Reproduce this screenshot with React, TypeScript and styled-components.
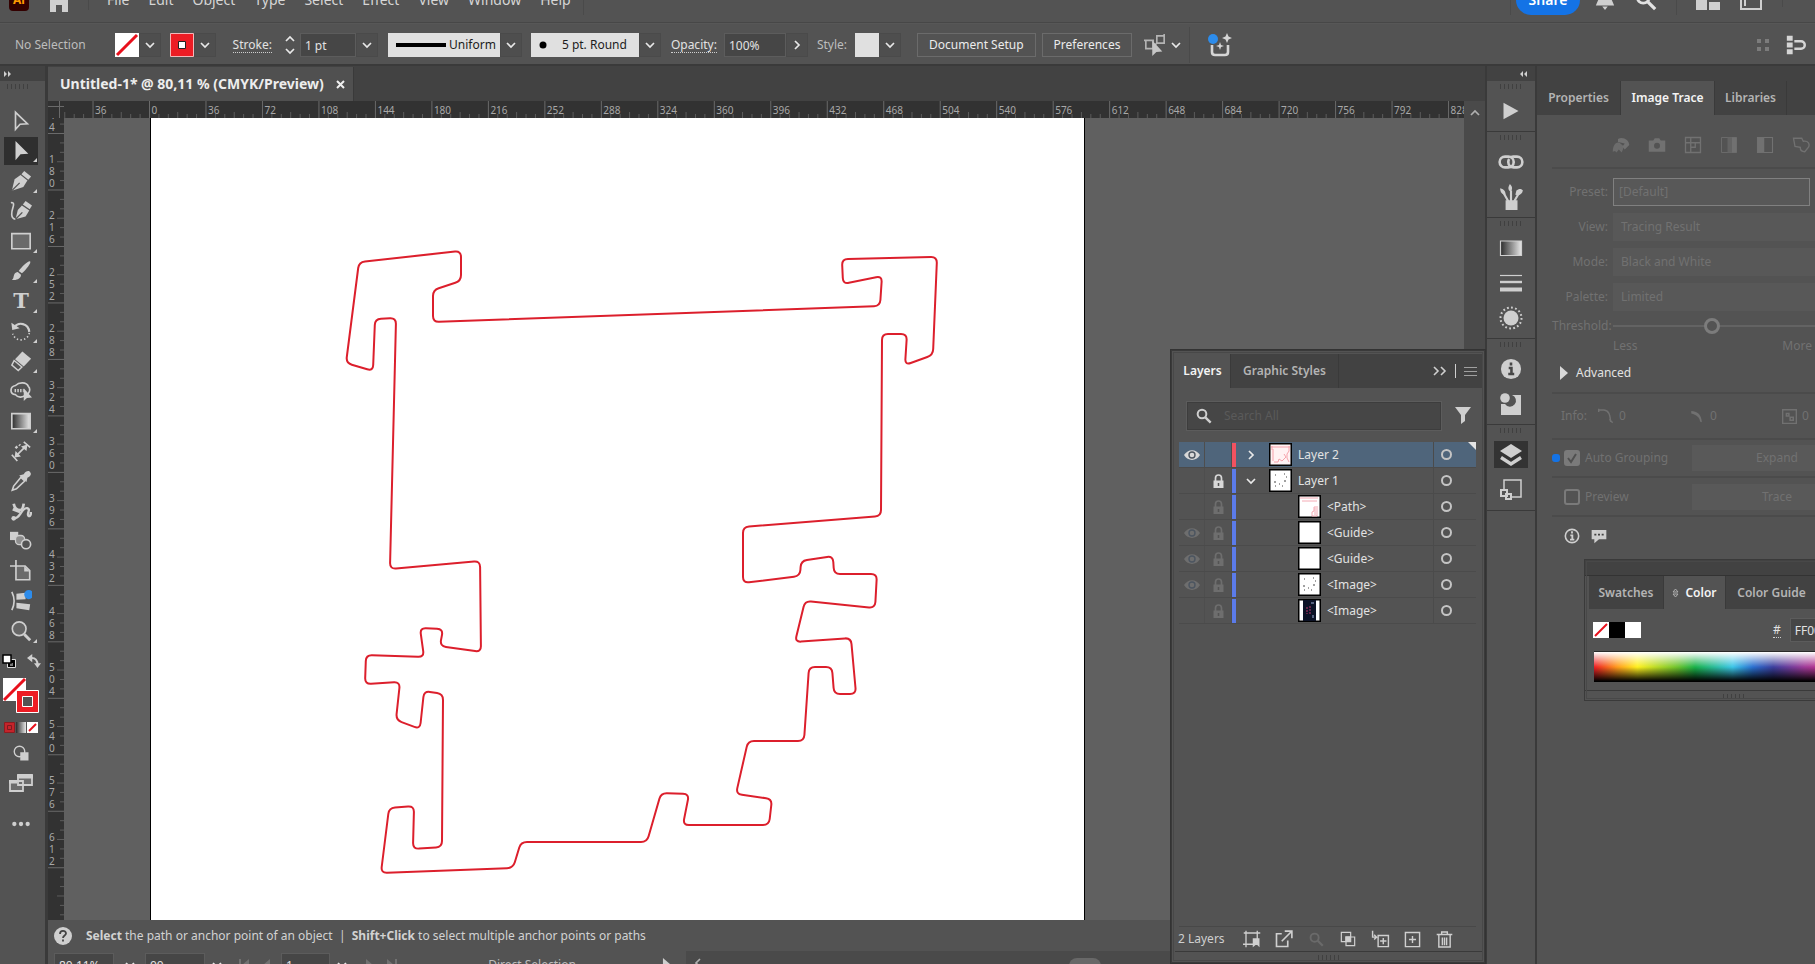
import React from "react";
import styled, { createGlobalStyle, css } from "styled-components";

const color = {
  chrome: "#535353",
  dark: "#424242",
  field: "#464646",
  line: "#3a3a3a",
  seam: "#4a4a4a",
  ruler: "#323232",
  canvas: "#606060",
  text: "#e2e2e2",
  soft: "#bdbdbd",
  icon: "#cfcfcf",
  off: "#717171",
  red: "#ed1c24",
  blue: "#1473e6",
};

const Global = createGlobalStyle`
  * { box-sizing: border-box; }
  body {
    margin: 0;
    overflow: hidden;
    background: ${color.chrome};
    color: ${color.text};
    font: 12px/16px "Noto Sans", "Open Sans", sans-serif;
  }
  button, input, select { font: inherit; color: inherit; margin: 0; }
  button { background: none; border: 0; padding: 0; }
  h2, ul, p { margin: 0; padding: 0; font: inherit; list-style: none; }
  svg { display: block; flex: none; }
`;

/* ---------- shell ---------- */

const Shell = styled.div`
  display: flex;
  flex-direction: column;
  height: 100vh;
  overflow: hidden;
`;

const MenuClip = styled.header`
  flex: none;
  height: 23px;
  overflow: hidden;
  border-bottom: 1px solid #474747;
`;

const MenuRow = styled.div`
  display: flex;
  align-items: center;
  height: 44px;
  margin-top: -22px;
  padding-left: 9px;
  font-size: 14px;
  line-height: 20px;
`;

const AppBadge = styled.span`
  display: flex;
  align-items: center;
  justify-content: center;
  width: 20px;
  height: 22px;
  margin-right: 18px;
  border-radius: 4px;
  background: #330000;
  color: #ff9a00;
  font-weight: 700;
  font-size: 12px;
`;

const Menus = styled.nav`
  display: flex;
  gap: 19px;
  padding-left: 18px;
  margin-left: 17px;
  border-left: 1px solid ${color.seam};
  color: #d6d6d6;
`;

const Divider = styled.span<{ $h?: number }>`
  flex: none;
  width: 1px;
  height: ${(p) => p.$h ?? 30}px;
  background: ${color.seam};
`;

const Grow = styled.span`
  flex: 1;
`;

const ShareButton = styled.button`
  width: 64px;
  height: 30px;
  margin-left: 5px;
  border-radius: 15px;
  background: ${color.blue};
  color: #fff;
  font-weight: 600;
`;

const MenuIcons = styled.div`
  display: flex;
  align-items: center;
  gap: 19px;
  padding-left: 14px;
`;

/* ---------- control bar ---------- */

const ControlBar = styled.div`
  display: flex;
  flex: none;
  align-items: center;
  height: 43px;
  padding: 2px 9px 0 15px;
  border-top: 1px solid #575757;
  border-bottom: 2px solid ${color.line};
  white-space: nowrap;
`;

const Group = styled.div<{ $ml?: number }>`
  display: flex;
  align-items: center;
  height: 24px;
  margin-left: ${(p) => p.$ml ?? 10}px;
`;

const Soft = styled.span`
  color: ${color.soft};
`;

const Dotted = styled.label`
  border-bottom: 1px dotted ${color.icon};
  line-height: 15px;
`;

const Arrow = styled.button<{ $w?: number }>`
  display: flex;
  align-items: center;
  justify-content: center;
  width: ${(p) => p.$w ?? 22}px;
  height: 24px;
  border: 1px solid ${color.seam};
  background: #4e4e4e;
`;

const Field = styled.input<{ $w: number }>`
  width: ${(p) => p.$w}px;
  height: 24px;
  padding: 0 4px;
  border: 1px solid #5c5c5c;
  border-radius: 0;
  background: ${color.field};
`;

const Stepper = styled.span`
  display: flex;
  flex-direction: column;
  align-items: center;
  justify-content: center;
  gap: 2px;
  width: 20px;
`;

const PreviewBox = styled.span<{ $w: number; $pad: number }>`
  display: flex;
  align-items: center;
  justify-content: space-between;
  width: ${(p) => p.$w}px;
  height: 24px;
  padding: 0 ${(p) => p.$pad}px 0 8px;
  background: #e0e0e0;
  color: #1c1c1c;
`;

const BareSelect = styled.select`
  appearance: none;
  padding: 0;
  border: 0;
  background: none;
  text-align: right;
`;

const LineButton = styled.button`
  height: 24px;
  padding: 0 11px;
  border: 1px solid #6b6b6b;
  color: #ececec;
`;

/* ---------- body ---------- */

const Body = styled.div`
  display: flex;
  flex: 1;
  min-height: 0;
`;

const Tools = styled.nav`
  flex: none;
  width: 48px;
  border-right: 3px solid ${color.line};
`;

const StripHead = styled.div<{ $end?: boolean }>`
  display: flex;
  flex: none;
  align-items: center;
  justify-content: ${(p) => (p.$end ? "flex-end" : "flex-start")};
  height: 15px;
  padding: 0 8px 0 4px;
  background: ${color.dark};
`;

const Grip = styled.div<{ $h: number; $left?: boolean }>`
  height: ${(p) => p.$h}px;
  background: repeating-linear-gradient(90deg, #404040 0 1px, transparent 1px 4px)
    ${(p) => (p.$left ? "7px 3px" : "center 3px")} / 22px 5px no-repeat;
`;

const ToolButton = styled.button<{ $on?: boolean }>`
  position: relative;
  display: flex;
  align-items: center;
  justify-content: center;
  width: 34px;
  height: 30px;
  margin-left: 4px;
  color: ${color.icon};
  ${(p) =>
    p.$on &&
    css`
      background: #2f2f2f;
      background-clip: padding-box;
      border: solid transparent;
      border-width: 1px 0;
    `}
`;

const Corner = styled.i`
  position: absolute;
  right: 1px;
  bottom: 3px;
  border: 2px solid ${color.icon};
  border-left-color: transparent;
  border-top-color: transparent;
`;

const TypeGlyph = styled.span`
  font: 700 21px/24px "DejaVu Serif", "Liberation Serif", serif;
`;

const MiniRow = styled.div`
  display: flex;
  align-items: center;
  justify-content: space-between;
  height: 30px;
  padding: 0 4px 0 2px;
`;

const ModeRow = styled.div`
  display: flex;
  align-items: center;
  gap: 1px;
  height: 22px;
  padding-left: 4px;
`;

const MoreTools = styled.div`
  padding-top: 11px;
`;

/* ---------- document ---------- */

const Doc = styled.main`
  position: relative;
  display: flex;
  flex: 1;
  flex-direction: column;
  min-width: 0;
`;

const DocTabs = styled.div`
  display: flex;
  flex: none;
  height: 35px;
  padding-top: 1px;
  background: ${color.dark};
`;

const DocTab = styled.div`
  display: flex;
  align-items: center;
  gap: 12px;
  padding: 0 8px 0 12px;
  border-right: 1px solid ${color.line};
  background: #505050;
  color: #ededed;
  font-size: 14px;
  font-weight: 700;
  white-space: nowrap;
`;

const Stage = styled.div`
  display: grid;
  flex: 1;
  grid-template: 17px minmax(0, 1fr) / 16px minmax(0, 1fr) 21px;
  min-height: 0;
`;

const RulerBox = styled.div`
  overflow: hidden;
  background: ${color.ruler};
  svg text {
    fill: #a8a8a8;
    font: 10px "Noto Sans", sans-serif;
  }
`;

const ScrollColumn = styled.div`
  grid-area: 1 / 3 / 3 / 4;
  display: flex;
  justify-content: center;
  padding-top: 7px;
  background: ${color.seam};
`;

const Canvas = styled.div`
  overflow: hidden;
  padding-left: 86px;
  background: ${color.canvas};
`;

const Artboard = styled.div`
  width: 935px;
  min-height: 100%;
  border: solid #000;
  border-width: 0 1px;
  background: #fff;
`;

const Hint = styled.div`
  display: flex;
  flex: none;
  align-items: center;
  gap: 14px;
  height: 31px;
  padding-left: 6px;
  color: #d2d2d2;
  white-space: pre;
`;

const StatusClip = styled.div`
  flex: none;
  height: 13px;
  overflow: hidden;
`;

const Status = styled.div`
  display: flex;
  align-items: center;
  height: 28px;
  padding-left: 6px;
  color: ${color.text};
`;

const ScrollTrack = styled.div`
  display: flex;
  flex: 1;
  gap: 366px;
  height: 28px;
  margin-left: 8px;
  padding: 7px 0 0 7px;
  background: ${color.seam};
`;

const Thumb = styled.div`
  width: 32px;
  height: 16px;
  border-radius: 8px;
  background: #686868;
`;

const Slot = styled.span<{ $w: number; $start?: boolean }>`
  display: flex;
  flex: none;
  align-items: center;
  justify-content: ${(p) => (p.$start ? "flex-start" : "center")};
  gap: 10px;
  width: ${(p) => p.$w}px;
`;

/* ---------- dock ---------- */

const Dock = styled.aside`
  display: flex;
  flex: none;
  flex-direction: column;
  width: 52px;
  border: solid ${color.line};
  border-width: 0 2px;
`;

const DockGroup = styled.div`
  padding-bottom: 3px;
  border-bottom: 1px solid ${color.line};
`;

const DockButton = styled.button<{ $on?: boolean }>`
  display: flex;
  align-items: center;
  justify-content: center;
  width: 34px;
  height: 35px;
  margin: 0 auto;
  color: ${color.icon};
  ${(p) =>
    p.$on &&
    css`
      border: solid transparent;
      border-width: 4px 0;
      background: #333;
      background-clip: padding-box;
    `}
`;

/* ---------- panels ---------- */

const Side = styled.aside`
  position: relative;
  flex: none;
  width: 278px;
  overflow: hidden;
`;

const Tabs = styled.div<{ $h: number }>`
  display: flex;
  flex: none;
  height: ${(p) => p.$h}px;
  background: ${color.dark};
  white-space: nowrap;
`;

const Tab = styled.button<{ $on?: boolean; $w: number }>`
  display: flex;
  flex: none;
  align-items: center;
  gap: 6px;
  justify-content: center;
  width: ${(p) => p.$w}px;
  border-right: 1px solid ${color.line};
  background: ${(p) => (p.$on ? color.chrome : "transparent")};
  color: ${(p) => (p.$on ? "#f4f4f4" : "#b4b4b4")};
  font-weight: 600;
`;

const TraceModes = styled.div`
  display: flex;
  align-items: center;
  gap: 18px;
  height: 54px;
  margin-left: 15px;
  padding: 8px 0 0 60px;
  border-bottom: 2px solid #4b4b4b;
  color: ${color.off};
`;

const TraceForm = styled.form`
  display: grid;
  grid-template-columns: 56px 260px;
  gap: 7px 5px;
  align-items: center;
  padding: 9px 0 0 15px;
  color: ${color.off};
`;

const FormLabel = styled.label`
  text-align: right;
`;

const TraceSelect = styled.select<{ $strong?: boolean }>`
  appearance: none;
  width: ${(p) => (p.$strong ? 197 : 260)}px;
  height: 28px;
  padding: 0 ${(p) => (p.$strong ? 5 : 8)}px;
  border: ${(p) => (p.$strong ? "1px solid #808080" : "0")};
  border-radius: 0;
  background: #585858;
`;

const Range = styled.input`
  appearance: none;
  width: 202px;
  height: 16px;
  background: linear-gradient(#636363, #636363) center / 100% 2px no-repeat;
  &::-webkit-slider-thumb {
    appearance: none;
    width: 16px;
    height: 16px;
    border: 3px solid #7c7c7c;
    border-radius: 50%;
    background: ${color.chrome};
  }
`;

const RangeEnds = styled.div`
  display: flex;
  justify-content: space-between;
  padding: 4px 3px 0 76px;
  color: ${color.off};
`;

const Advanced = styled.button`
  display: flex;
  align-items: center;
  gap: 8px;
  height: 38px;
  padding-left: 23px;
  color: ${color.text};
`;

const SideRow = styled.div<{ $h: number }>`
  display: flex;
  align-items: center;
  height: ${(p) => p.$h}px;
  margin-left: 15px;
  border-top: 2px solid #4b4b4b;
  color: ${color.off};
`;

const InfoCell = styled.span<{ $w: number }>`
  display: flex;
  flex: none;
  align-items: center;
  gap: 5px;
  width: ${(p) => p.$w}px;
`;

const InfoLabel = styled(InfoCell)`
  padding-left: 9px;
`;

const Dot = styled.i<{ $show?: boolean }>`
  flex: none;
  width: 8px;
  height: 8px;
  margin-right: 4px;
  border-radius: 3px;
  background: ${(p) => (p.$show ? color.blue : "transparent")};
`;

const CheckLabel = styled.label`
  display: flex;
  flex: none;
  align-items: center;
  gap: 5px;
  width: 128px;
`;

const Check = styled.input`
  appearance: none;
  width: 16px;
  height: 16px;
  margin: 0;
  border: 2px solid #7a7a7a;
  border-radius: 3px;
  &:checked {
    background: #7a7a7a;
  }
`;

const CheckBox = styled.span`
  display: grid;
  > * {
    grid-area: 1 / 1;
  }
  svg {
    z-index: 1;
    pointer-events: none;
  }
`;

const WideButton = styled.button`
  flex: none;
  width: 170px;
  height: 26px;
  background: #595959;
`;

const SideFoot = styled(SideRow)`
  gap: 11px;
  padding-left: 12px;
  color: ${color.icon};
`;

const FloatBase = css`
  position: absolute;
  border: 1px solid ${color.line};
  outline: 1px solid #484848;
  outline-offset: -3px;
  background: ${color.chrome};
`;

const ColorPanel = styled.section`
  ${FloatBase}
  top: 493px;
  left: 47px;
  width: 300px;
`;

const ColorHead = styled.div`
  height: 16px;
  border-bottom: 1px solid #333;
  background: ${color.dark};
`;

const ColorTabs = styled.div`
  padding-left: 4px;
`;

const ColorRow = styled.div`
  display: flex;
  align-items: center;
  height: 42px;
  padding-left: 8px;
`;

const Chip = styled.button<{ $bg: string }>`
  width: 16px;
  height: 16px;
  background: ${(p) => p.$bg};
`;

const Spectrum = styled.div`
  height: 31px;
  margin: 0 0 8px 9px;
  border-top: 1px solid #2a2a2a;
  background: linear-gradient(#fff 0, rgba(255, 255, 255, 0) 50%, rgba(0, 0, 0, 0) 50%, #000 97%),
    linear-gradient(
      90deg,
      #ed1c24 0,
      #ff9a1c 8%,
      #fff01e 15%,
      #6cc32e 29%,
      #19b24a 35%,
      #3cc6e8 48%,
      #2a6fd0 55%,
      #3c3f9e 62%,
      #a03a98 73%,
      #ee2a7b 88%,
      #ed1c24 100%
    );
`;

const HexField = styled(Field)`
  margin-left: 9px;
`;

/* ---------- layers ---------- */

const LayersPanel = styled.section`
  ${FloatBase}
  top: 284px;
  right: 0;
  bottom: 1px;
  display: flex;
  flex-direction: column;
  width: 314px;
  padding: 3px 1px 0 3px;
  box-shadow: 0 0 0 1px #333;
`;

const PanelTools = styled.div`
  display: flex;
  flex: 1;
  align-items: center;
  justify-content: flex-end;
  gap: 8px;
  padding-right: 6px;
  color: ${color.icon};
`;

const SearchRow = styled.div`
  display: flex;
  flex: none;
  align-items: center;
  gap: 14px;
  height: 54px;
  padding: 1px 12px 0;
  color: ${color.icon};
`;

const SearchBox = styled.label`
  display: flex;
  flex: 1;
  align-items: center;
  gap: 12px;
  height: 28px;
  padding-left: 8px;
  border: 1px solid #3d3d3d;
  outline: 1px solid #5c5c5c;
  background: ${color.field};
  input {
    flex: 1;
    min-width: 0;
    padding: 0;
    border: 0;
    background: none;
    outline: none;
  }
  input::placeholder {
    color: #5a5a5a;
    opacity: 1;
  }
`;

const LayerList = styled.ul`
  flex: 1;
  min-height: 0;
  margin: 0 7px 0 4px;
  border-bottom: 1px solid #484848;
`;

const LayerRow = styled.li<{ $on?: boolean }>`
  position: relative;
  display: flex;
  align-items: center;
  height: 26px;
  border-bottom: 1px solid #4b4b4b;
  background: ${(p) => (p.$on ? "#4f657b" : "transparent")};
`;

const Cell = styled.button<{ $w: number; $dim?: boolean }>`
  display: flex;
  flex: none;
  align-items: center;
  justify-content: center;
  width: ${(p) => p.$w}px;
  height: 100%;
  border-right: 1px solid #4e4e4e;
  color: ${(p) => (p.$dim ? "#6e6e6e" : "#d8d8d8")};
`;

const ColorBar = styled.i<{ $c: string }>`
  flex: none;
  width: 4px;
  height: 24px;
  background: ${(p) => p.$c};
`;

const Expander = styled.span<{ $w: number }>`
  display: flex;
  flex: none;
  align-items: center;
  width: ${(p) => p.$w}px;
  padding-left: 10px;
`;

const LayerName = styled.span`
  flex: 1;
  padding-left: 6px;
`;

const TargetCell = styled.button`
  display: flex;
  align-items: center;
  width: 43px;
  height: 100%;
  padding-left: 7px;
  border-left: 1px solid #4b4b4b;
`;

const Ring = styled.i`
  width: 11px;
  height: 11px;
  border: 2px solid #c4c4c4;
  border-radius: 50%;
`;

const Flag = styled.i`
  position: absolute;
  top: 0;
  right: 0;
  border: 4px solid #e4e4e4;
  border-left-color: transparent;
  border-bottom-color: transparent;
`;

const LayersFoot = styled.div`
  display: flex;
  flex: none;
  align-items: center;
  height: 24px;
  padding-left: 3px;
  color: ${color.icon};
`;

const FootIcon = styled.button<{ $dim?: boolean }>`
  display: flex;
  align-items: center;
  justify-content: center;
  width: 32px;
  color: ${(p) => (p.$dim ? "#6a6a6a" : color.icon)};
`;

const PanelGrip = styled.div`
  flex: none;
  border-top: 1px solid ${color.line};
`;

/* ---------- icons ---------- */

type IconProps = { s?: number; vb?: string; children: React.ReactNode };
const Svg = ({ s = 24, vb = "0 0 24 24", children }: IconProps) => (
  <svg width={s} height={s} viewBox={vb} fill="none" stroke="currentColor" strokeWidth="1.8" aria-hidden="true">
    {children}
  </svg>
);
const solid = { fill: "currentColor", stroke: "none" };

const Chevron = ({ dir = "down", c = "#e8e8e8", s = 10 }: { dir?: string; c?: string; s?: number }) => {
  const d: Record<string, string> = {
    down: "M1 3l4 4 4-4",
    up: "M1 7l4-4 4 4",
    right: "M3 1l4 4-4 4",
    left: "M7 1L3 5l4 4",
  };
  return (
    <svg width={s} height={s} viewBox="0 0 10 10" fill="none" stroke={c} strokeWidth="1.7" aria-hidden="true">
      <path d={d[dir]} />
    </svg>
  );
};

const StepIcon = ({ back, bar }: { back?: boolean; bar?: boolean }) => (
  <svg width="11" height="12" viewBox="0 0 11 12" fill={color.off} aria-hidden="true">
    <path d={back ? "M10 0v12L3 6z" : "M1 0v12l7-6z"} />
    {bar && <path d={back ? "M0 0h2v12H0z" : "M9 0h2v12H9z"} />}
  </svg>
);

const DoubleTri = ({ flip }: { flip?: boolean }) => (
  <svg width="7" height="6" viewBox="0 0 7 6" fill="#d0d0d0" aria-hidden="true">
    <path d={flip ? "M3 0L0 3l3 3zM7 0L4 3l3 3z" : "M0 0l3 3-3 3zM4 0l3 3-3 3z"} />
  </svg>
);

const Magnifier = ({ s = 16 }: { s?: number }) => (
  <Svg s={s}>
    <circle cx="9" cy="9" r="6.5" strokeWidth="3" />
    <path d="M14 14l8 8" strokeWidth="3.6" />
  </Svg>
);

const NoneSwatch = ({ w, h, thick = 3 }: { w: number; h: number; thick?: number }) => (
  <svg width={w} height={h} viewBox={`0 0 ${w} ${h}`} aria-hidden="true">
    <path d={`M0 0H${w}V${h}H0z`} fill="#fff" />
    <path d={`M2 ${h - 2}L${w - 2} 2`} stroke="#e8101c" strokeWidth={thick} />
  </svg>
);

const tools: { name: string; sub?: boolean; on?: boolean; art: React.ReactNode }[] = [
  { name: "Selection", art: <path d="M6 2.500V21l5-5.500 8-.5z" /> },
  { name: "Direct Selection", sub: true, on: true, art: <path d="M6 1v21l5.500-6.500L20 15z" {...solid} /> },
  {
    name: "Pen",
    sub: true,
    art: (
      <g {...solid}>
        <path d="M15.500 1l7.500 6-3 3.500-7.500-6z" />
        <path d="M11.500 5.500l7.500 6-4.500 7L2 22.500 5 10z" />
        <path d="M2 22.500l8.500-8.500" stroke="#535353" strokeWidth="1.400" />
      </g>
    ),
  },
  {
    name: "Curvature",
    art: (
      <>
        <path d="M1 3c4-1 3 3 2 6s-3 11 3 12" />
        <g {...solid}>
          <path d="M17 1l7 5-2.500 4-7.500-5z" />
          <path d="M13 6l8 5.500-4 6.500L6 21l2.500-10z" />
          <path d="M6 21l7.500-7.500" stroke="#535353" strokeWidth="1.400" />
        </g>
      </>
    ),
  },
  { name: "Rectangle", sub: true, art: <path d="M2 4h20v16.500H2z" fill="#6a6a6a" /> },
  {
    name: "Paintbrush",
    sub: true,
    art: (
      <g {...solid}>
        <path d="M22 1.500c1.500 1-4 8.500-9 13L9.500 12C13 7 20 .5 22 1.500z" />
        <path d="M8.500 13l3.500 3c0 4-4.500 6.500-10 5.500 2-1 1.500-2.500 2.500-5.500.7-2 2.500-3 4-3z" />
      </g>
    ),
  },
  { name: "Type", sub: true, art: null },
  {
    name: "Rotate",
    sub: true,
    art: (
      <>
        <path d="M5 7.500C9 2 20 3 21 13" strokeWidth="2.400" />
        <path d="M1.500 3l1 8 8-2z" {...solid} />
        <path d="M21 14c-1 9-15 11-18 1" strokeDasharray="1.500 2.500" />
      </>
    ),
  },
  {
    name: "Eraser",
    sub: true,
    art: (
      <g {...solid}>
        <path d="M13.500 1.500l9.500 8-8 8.500-9.500-8z" />
        <path d="M4.500 11.500l8.500 7-4 4-7-6z" stroke="currentColor" strokeWidth="1.600" fill="none" />
      </g>
    ),
  },
  {
    name: "Shape Builder",
    art: (
      <>
        <path d="M6 6c4-4 12-4 14 1 3 3 1 9-3 9-3 4-9 3-11 0-7-1-6-9 0-10z" />
        <path d="M5 11.500h10" strokeDasharray="1.600 1.400" strokeWidth="3.500" />
        <path d="M15 9v14l3.500-3.500 5.500-.5z" {...solid} />
      </>
    ),
  },
  { name: "Gradient", sub: true, art: <path d="M2 4h20v16.500H2z" fill="url(#ramp)" /> },
  {
    name: "Measure",
    art: (
      <>
        <path d="M2 16l6 7M15 2l7 6M8 16l8-8" />
        <path d="M5 19l1-7 6 6zM19 5l-7 2 6 5z" {...solid} />
        <path d="M6 9l2-2M10 5l1 1" strokeWidth="2.600" />
      </>
    ),
  },
  {
    name: "Eyedropper",
    art: (
      <>
        <path d="M12 8l4 4-9 8.500-4.500 1.500L4 17.500z" />
        <path d="M15 4.500C17 1 21 0 22 2.500c2 2 0 5-3 6l-1 4.500-8-7z" {...solid} />
      </>
    ),
  },
  {
    name: "Puppet Warp",
    art: (
      <>
        <path d="M3 20c5 1 7-3 9-6s4-6 7-5c4 1-1 6 1 8s3-2 3-4" strokeWidth="2.600" />
        <path d="M4 4c1 5 4 7 7 7s4-7 4-7M3 10l8 3" strokeWidth="3" />
        <circle cx="4" cy="20" r="2.500" {...solid} />
      </>
    ),
  },
  {
    name: "Blend",
    art: (
      <>
        <path d="M0 2h9v9H0z" {...solid} />
        <rect x="6" y="6" width="10" height="10" rx="4" fill="#8e8e8e" strokeWidth="1.400" />
        <circle cx="17.500" cy="15.500" r="5" fill="#535353" />
      </>
    ),
  },
  {
    name: "Artboard",
    art: (
      <>
        <path d="M6.500 6.500h10l5 5v10h-15z" fill="#6a6a6a" />
        <path d="M6.500 0v6.500H0" />
        <path d="M15.500 6.500l6 6h-6z" {...solid} />
      </>
    ),
  },
  {
    name: "Slice",
    art: (
      <>
        <path d="M2 2c3 6 3 14 0 20" />
        <path d="M7 4l10-1v7L7 10.500zM7 14l15 1.500-1 6.500-14-2z" {...solid} />
        <circle cx="20.500" cy="5" r="5" fill="#2d8ceb" stroke="none" />
      </>
    ),
  },
  {
    name: "Zoom",
    sub: true,
    art: (
      <>
        <circle cx="10" cy="9.500" r="7.500" fill="#666" />
        <path d="M15.500 15.500L22 22" strokeWidth="3.200" />
      </>
    ),
  },
];

/* ---------- artwork ---------- */

type Pt = [number, number];

const outline: Pt[] = [
  [208, 145], [310, 134], [310, 164], [282, 173], [282, 205], [729, 189], [731, 159], [692, 167],
  [691, 142], [786, 140], [782, 238], [754, 248], [756, 217], [731, 217], [730, 399], [592, 410],
  [592, 466], [649, 459], [650, 444], [682, 439], [683, 457], [726, 457], [724, 491], [654, 484],
  [644, 525], [700, 521], [705, 577], [683, 577], [681, 550], [658, 550], [653, 624], [597, 624],
  [585, 677], [621, 682], [618, 708], [532, 708], [538, 677], [510, 676], [496, 725], [370, 725],
  [362, 751], [230, 756], [238, 691], [263, 689], [262, 732], [291, 730], [292, 577], [273, 574],
  [269, 612], [245, 603], [249, 565], [214, 567], [215, 538], [273, 540], [269, 511], [292, 512],
  [289, 529], [330, 535], [329, 444], [239, 452], [245, 201], [224, 202], [222, 254], [195, 246],
];

const rounded = (pts: Pt[], r: number) => {
  const toward = (a: Pt, b: Pt): Pt => {
    const len = Math.hypot(b[0] - a[0], b[1] - a[1]);
    const t = Math.min(r, len / 2) / len;
    return [a[0] + (b[0] - a[0]) * t, a[1] + (b[1] - a[1]) * t];
  };
  return (
    pts
      .map((p, i) => {
        const a = toward(p, pts[(i + pts.length - 1) % pts.length]);
        const b = toward(p, pts[(i + 1) % pts.length]);
        return `${i ? "L" : "M"}${a.map((n) => n.toFixed(1))} Q${p} ${b.map((n) => n.toFixed(1))}`;
      })
      .join(" ") + "Z"
  );
};

/* ---------- rulers ---------- */

const STEP = 56.48;

const TopRuler = () => {
  const marks = Array.from({ length: 26 }, (_, i) => i - 2);
  return (
    <svg width="1500" height="17" aria-hidden="true">
      {marks.map((n) => {
        const x = 85.5 + n * STEP;
        return (
          <g key={n}>
            <path d={`M${x} 0V17`} stroke="#6a6a6a" />
            {[1, 2, 3, 4, 5].map((k) => (
              <path key={k} d={`M${x + (k * STEP) / 6} ${k === 3 ? 11 : 13}V17`} stroke="#5c5c5c" />
            ))}
            <text x={x + 2} y="13">
              {Math.abs(n * 36)}
            </text>
          </g>
        );
      })}
    </svg>
  );
};

const SideRuler = () => {
  const marks = Array.from({ length: 15 }, (_, i) => i);
  return (
    <svg width="16" height="1000" aria-hidden="true">
      {marks.map((n) => {
        const y = 15.5 + n * STEP;
        const digits = n < 14 ? String(144 + n * 36).split("") : [];
        return (
          <g key={n}>
            {n < 14 && <path d={`M0 ${y}H16`} stroke="#6a6a6a" />}
            {[1, 2, 3, 4, 5].map((k) => (
              <path key={k} d={`M${k === 3 ? 9 : 12} ${y - (k * STEP) / 6}H16`} stroke="#5c5c5c" />
            ))}
            {digits.map((d, i) => (
              <text key={i} x="1" y={y - 27 + i * 12}>
                {d}
              </text>
            ))}
          </g>
        );
      })}
    </svg>
  );
};

/* ---------- layers data ---------- */

type Layer = { name: string; child?: boolean; on?: boolean; eye?: boolean; lock?: boolean; thumb: string };

const layers: Layer[] = [
  { name: "Layer 2", on: true, eye: true, thumb: "pink" },
  { name: "Layer 1", lock: true, thumb: "dots" },
  { name: "<Path>", child: true, lock: true, thumb: "path" },
  { name: "<Guide>", child: true, eye: true, lock: true, thumb: "blank" },
  { name: "<Guide>", child: true, eye: true, lock: true, thumb: "blank" },
  { name: "<Image>", child: true, eye: true, lock: true, thumb: "dots" },
  { name: "<Image>", child: true, lock: true, thumb: "night" },
];

const LayerThumb = ({ kind }: { kind: string }) => (
  <svg width="23" height="23" viewBox="0 0 23 23" aria-hidden="true">
    <path d="M.75.75h21.500v21.500H.75z" fill={kind === "pink" ? "#fff2f3" : "#fff"} stroke="#000" strokeWidth="1.500" />
    {kind === "pink" && (
      <path d="M2 4h19M3 7V3M20 3v5l-2 3v4l2 4M4 6v12M5 19h4l1-3 3 2 4-4-2-3" fill="none" stroke="#f6a2ab" />
    )}
    {kind === "path" && (
      <path d="M2 3h18M4 6h15M20 12h-4v4l-2 1v4h5v-8M17 13v7" fill="none" stroke="#f4aab4" />
    )}
    {kind === "dots" && (
      <path d="M6 6h1M15 5h1M5 13h2M10 15h1M15 12h2M17 8h1M13 17h1M6 17h1" stroke="#444" strokeWidth="1.200" />
    )}
    {kind === "night" && (
      <>
        <path d="M5 1h13v21H5z" fill="#0c1226" />
        <path d="M9 8v7M12 7v9" stroke="#b8326a" strokeDasharray="2 1" />
        <path d="M13 4h3M15 16v3" stroke="#9fb0d8" />
      </>
    )}
  </svg>
);

const Eye = () => (
  <svg width="16" height="12" viewBox="0 0 16 12" aria-hidden="true">
    <path d="M0 6C4-.5 12-.5 16 6 12 12.500 4 12.500 0 6z" fill="currentColor" />
    <circle cx="8" cy="6" r="3" fill="none" stroke="#4c5560" strokeWidth="1.400" />
  </svg>
);

const Lock = () => (
  <svg width="11" height="14" viewBox="0 0 11 14" aria-hidden="true">
    <path d="M2.500 7V4a3 3 0 016 0v3" fill="none" stroke="currentColor" strokeWidth="1.700" />
    <path d="M.5 6.500h10V14H.5z" fill="currentColor" />
    <path d="M5.500 9v3" stroke="#535353" strokeWidth="1.500" />
  </svg>
);

const InfoMark = ({ s = 22, ring }: { s?: number; ring?: boolean }) => (
  <Svg s={s}>
    {ring ? <circle cx="12" cy="12" r="10" strokeWidth="2.400" /> : <circle cx="12" cy="12" r="11" {...solid} />}
    <path
      d="M12 5v3.200M9.500 11h3v6M9 17.500h6.500"
      stroke={ring ? "currentColor" : "#484848"}
      strokeWidth="2.800"
    />
  </Svg>
);

const dock: { name: string; on?: boolean; art: React.ReactNode }[][] = [
  [{ name: "Play", art: <Svg s={20}><path d="M3 2l18 10L3 22z" {...solid} /></Svg> }],
  [
    {
      name: "Links",
      art: (
        <Svg s={26}>
          <rect x="1.500" y="7" width="13" height="10" rx="5" strokeWidth="2.400" />
          <path d="M12 7.500A5 5 0 0114.500 7h3a5 5 0 010 10h-3a5 5 0 01-5-5c0-1 .3-2 .8-2.800" strokeWidth="2.400" />
        </Svg>
      ),
    },
    {
      name: "Brushes",
      art: (
        <Svg s={26}>
          <path d="M7 15h11v9H7z" {...solid} />
          <path d="M9.500 16L5 8M12 16V6M15 16l4-7" strokeWidth="2" />
          <path d="M11 0c3 3 2 5 1 7-3-1-3-4-1-7zM2 4c4 1 5 3 5 6-3 0-5-2-5-6zM17 6c2-2 5-2 6 0-1 4-4 5-7 4z" {...solid} />
        </Svg>
      ),
    },
  ],
  [
    { name: "Gradient", art: <Svg s={24}><path d="M1.500 5h21v14.500h-21z" fill="url(#ramp)" strokeWidth="1.200" /></Svg> },
    {
      name: "Stroke",
      art: <Svg s={24}><path d="M1 4.500h22" strokeWidth="1.200" /><path d="M1 11h22" strokeWidth="2.400" /><path d="M1 18.500h22" strokeWidth="4" /></Svg>,
    },
    {
      name: "Transparency",
      art: <Svg s={24}><circle cx="12" cy="12" r="7.500" {...solid} /><circle cx="12" cy="12" r="10.500" strokeDasharray="1.800 2.300" strokeWidth="2" /></Svg>,
    },
  ],
  [
    { name: "Info", art: <InfoMark /> },
    {
      name: "Symbols",
      art: <Svg s={24}><path d="M2 12V23h20V3H13a6 6 0 11-7 9z" {...solid} /><circle cx="6" cy="6" r="4.800" {...solid} /></Svg>,
    },
  ],
  [
    {
      name: "Layers",
      on: true,
      art: <Svg s={24}><path d="M12 1l11 7-11 7L1 8z" {...solid} /><path d="M2 14.500l10 6.500 10-6.500" strokeWidth="3.400" /></Svg>,
    },
    {
      name: "Asset Export",
      art: (
        <Svg s={24}>
          <path d="M5 11V2h17v17h-9" strokeWidth="1.500" />
          <path d="M2 12h6v6H2zM7 16h5v5H7z" strokeWidth="2" />
        </Svg>
      ),
    },
  ],
];

const traceIcons = [
  <g {...solid}><path d="M8 4c6-4 15 1 15 8l-6 6-3-4 3-4-9-2z" /><path d="M1 21C1 13 5 7 10 9l6 5-3 8-4-4-3 4-2-2z" opacity=".85" /></g>,
  <g {...solid}><path d="M1 6h6l2-3h6l2 3h6v15H1z" /><circle cx="12" cy="13" r="4" fill="#535353" /></g>,
  <path d="M2 2h20v20H2zM2 9h20M9 2v20M15 9v6h-6" />,
  <><path d="M2 2h20v20H2z" strokeWidth="1" /><path d="M10 2h6v20h-6z" fill="#646464" stroke="none" /><path d="M16 2h6v20h-6z" {...solid} /></>,
  <><path d="M2 2h20v20H2z" strokeWidth="1.500" /><path d="M2 2h9v20H2z" {...solid} /></>,
  <path d="M2 3h11l2 4c7-1 9 4 7 8l-5 6c-4 0-6-2-6-6l-7-1z" />,
];

const menus = ["File", "Edit", "Object", "Type", "Select", "Effect", "View", "Window", "Help"];

const Combo = ({ children, name, ml }: { children: React.ReactNode; name: string; ml?: number }) => (
  <Group $ml={ml}>
    {children}
    <Arrow aria-label={name}>
      <Chevron />
    </Arrow>
  </Group>
);

export default function App() {
  return (
    <Shell>
      <Global />
      <svg width="0" height="0" style={{ position: "absolute" }} aria-hidden="true">
        <linearGradient id="ramp">
          <stop offset="0" stopColor="#2c2c2c" />
          <stop offset="1" stopColor="#e8e8e8" />
        </linearGradient>
      </svg>

      <MenuClip>
        <MenuRow>
          <AppBadge>Ai</AppBadge>
          <Svg s={24}>
            <path d="M12 1L0 12h3v12h6v-7h6v7h6V12h3z" {...solid} fill={color.icon} />
          </Svg>
          <Menus>
            {menus.map((m) => (
              <span key={m}>{m}</span>
            ))}
          </Menus>
          <Group $ml={12}>
            <Divider />
          </Group>
          <Grow />
          <Divider />
          <ShareButton>Share</ShareButton>
          <MenuIcons>
            <Svg s={22}>
              <path d="M12 1c-6 0-7 5-7 10l-3 7h20l-3-7c0-5-1-10-7-10zM9 19h6l-3 4z" fill={color.icon} stroke="none" />
            </Svg>
            <Magnifier s={22} />
            <Divider />
            <Svg s={24}>
              <path d="M0 1h11v21H0zM13 1h11v11H13zM13 14h11v8H13z" fill={color.icon} stroke="none" />
            </Svg>
            <Svg s={24}>
              <path d="M2 1h20v20H2zM6 4v14" stroke={color.icon} strokeWidth="2" />
            </Svg>
            <Divider $h={14} />
          </MenuIcons>
          <Slot $w={32} />
        </MenuRow>
      </MenuClip>

      <ControlBar>
        <Soft>No Selection</Soft>
        <Combo name="Fill" ml={29}>
          <NoneSwatch w={24} h={24} />
        </Combo>
        <Combo name="Stroke colour" ml={9}>
          <svg width="24" height="24" aria-hidden="true">
            <path d="M.5.5h23v23H.5z" fill={color.red} stroke="#f3b7b9" />
            <path d="M8.500 8.500h7v7h-7z" fill="#fff" stroke="#222" />
          </svg>
        </Combo>
        <Group $ml={17}>
          <Dotted htmlFor="weight">Stroke:</Dotted>
        </Group>
        <Group $ml={8}>
          <Stepper>
            <Chevron dir="up" />
            <Chevron />
          </Stepper>
          <Field id="weight" $w={56} defaultValue="1 pt" />
          <Arrow aria-label="Stroke weight presets">
            <Chevron />
          </Arrow>
        </Group>
        <Combo name="Width profile" ml={10}>
          <PreviewBox $w={112} $pad={4}>
            <svg width="50" height="4" aria-hidden="true">
              <path d="M0 2h50" stroke="#000" strokeWidth="4" />
            </svg>
            <BareSelect aria-label="Width profile">
              <option>Uniform</option>
            </BareSelect>
          </PreviewBox>
        </Combo>
        <Combo name="Brush" ml={9}>
          <PreviewBox $w={108} $pad={12}>
            <svg width="8" height="8" aria-hidden="true">
              <circle cx="4" cy="4" r="3.500" fill="#000" />
            </svg>
            <BareSelect aria-label="Brush definition">
              <option>5 pt. Round</option>
            </BareSelect>
          </PreviewBox>
        </Combo>
        <Group>
          <Dotted htmlFor="opacity">Opacity:</Dotted>
        </Group>
        <Group $ml={7}>
          <Field id="opacity" $w={62} defaultValue="100%" />
          <Arrow aria-label="Opacity slider">
            <Chevron dir="right" />
          </Arrow>
        </Group>
        <Group $ml={9}>
          <Soft>Style:</Soft>
        </Group>
        <Combo name="Graphic style" ml={8}>
          <svg width="24" height="24" aria-hidden="true">
            <path d="M0 0h24v24H0z" fill="#e0e0e0" />
          </svg>
        </Combo>
        <Group $ml={16}>
          <LineButton>Document Setup</LineButton>
        </Group>
        <Group $ml={6}>
          <LineButton>Preferences</LineButton>
        </Group>
        <Group $ml={12}>
          <Svg s={22}>
            <path d="M2 7h8v9H2zM14 2h8v8h-8zM0 7h2M22 0v2M14 10l-2 2" stroke="#b4b4b4" />
            <path d="M9 7v17l4.500-4.500L20 19z" fill="#c6c6c6" stroke="none" />
          </Svg>
        </Group>
        <Group $ml={5}>
          <Chevron />
        </Group>
        <Group $ml={8}>
          <Divider $h={36} />
        </Group>
        <Group $ml={18}>
          <Svg s={24}>
            <path d="M4 12v7c0 2 1 3 3 3h10c2 0 3-1 3-3v-7" stroke="#d5d5d5" strokeWidth="2.600" />
            <circle cx="5" cy="6" r="5" fill="#2d8ceb" stroke="none" />
            <path d="M19 0l1.500 3.500L24 5l-3.500 1.500L19 10l-1.500-3.500L14 5l3.500-1.500zM12 9l1 3 3 1-3 1-1 3-1-3-3-1 3-1z" fill="#d5d5d5" stroke="none" />
          </Svg>
        </Group>
        <Grow />
        <Svg s={16}>
          <path d="M3 3h6v6H3zM15 3h6v6h-6zM3 15h6v6H3zM15 15h6v6h-6z" fill="#7c7c7c" stroke="none" />
        </Svg>
        <Group $ml={15}>
          <Svg s={20}>
            <path d="M1 1h7v6H1zM1 9h7v6H1zM1 17h7v6H1z" fill="#d5d5d5" stroke="none" />
            <path d="M10 7.500h8a4.500 4.500 0 010 9h-8" stroke="#d5d5d5" strokeWidth="3" />
          </Svg>
        </Group>
      </ControlBar>

      <Body>
        <Tools aria-label="Tools">
          <StripHead>
            <DoubleTri />
          </StripHead>
          <Grip $h={25} $left />
          {tools.map((t) => (
            <ToolButton key={t.name} $on={t.on} aria-label={t.name}>
              {t.art ? <Svg s={22}>{t.art}</Svg> : <TypeGlyph>T</TypeGlyph>}
              {t.sub && <Corner />}
            </ToolButton>
          ))}
          <MiniRow>
            <svg width="15" height="15" aria-hidden="true">
              <path d="M5.500 5.500h8v8h-8z" fill="#000" stroke="#ddd" />
              <path d="M8 9h3v3H8z" fill="#777" />
              <path d="M1 1h8v8H1z" fill="#fff" stroke="#000" strokeWidth="1.500" />
            </svg>
            <Svg s={14}>
              <path d="M6 7c9-1 12 4 12 12" stroke={color.icon} strokeWidth="3.400" />
              <path d="M9 0v14L0 7zM12 16h12l-6 8z" fill={color.icon} stroke="none" />
            </Svg>
          </MiniRow>
          <svg width="45" height="40" aria-hidden="true">
            <path d="M3 2h23v23H3z" fill="#fff" />
            <path d="M4 24L25 3" stroke="#e8101c" strokeWidth="3" />
            <path d="M16.500 14.500h22v22h-22z" fill={color.red} stroke="#fff" />
            <path d="M22.500 20.500h10v10h-10z" fill={color.chrome} stroke="#fff" />
          </svg>
          <ModeRow>
            <svg width="11" height="11" aria-hidden="true">
              <path d="M.5.5h10v10H.5z" fill="#c4242b" stroke="#8e1b20" />
              <path d="M3.500 3.500h4v4h-4z" fill="none" stroke="#7d1a1f" />
            </svg>
            <svg width="10" height="11" aria-hidden="true">
              <path d="M0 0h10v11H0z" fill="url(#ramp)" />
            </svg>
            <NoneSwatch w={11} h={11} thick={2} />
          </ModeRow>
          <ToolButton aria-label="Drawing mode">
            <Svg s={18}>
              <circle cx="10" cy="10" r="7" />
              <path d="M11 11h11v11H11z" {...solid} />
            </Svg>
          </ToolButton>
          <ToolButton aria-label="Screen mode">
            <Svg s={24}>
              <path d="M1 10h13v10H1zM9 4h14v10H9z" fill="#6c6c6c" />
              <path d="M8 4h16v3.500H8zM0 9h8v3.500H0z" {...solid} />
            </Svg>
          </ToolButton>
          <MoreTools>
            <ToolButton aria-label="Edit toolbar">
              <Svg s={20}>
                <circle cx="4" cy="12" r="2.600" {...solid} />
                <circle cx="12" cy="12" r="2.600" {...solid} />
                <circle cx="20" cy="12" r="2.600" {...solid} />
              </Svg>
            </ToolButton>
          </MoreTools>
        </Tools>

        <Doc>
          <DocTabs>
            <DocTab>
              Untitled-1* @ 80,11 % (CMYK/Preview)
              <svg width="9" height="9" viewBox="0 0 9 9" stroke="#f0f0f0" strokeWidth="2" aria-hidden="true">
                <path d="M1 1l7 7M8 1L1 8" />
              </svg>
            </DocTab>
          </DocTabs>
          <Stage>
            <RulerBox>
              <svg width="16" height="17" aria-hidden="true">
                <path d="M0 5.500h16M11.500 0v17" stroke="#6a6a6a" />
              </svg>
            </RulerBox>
            <RulerBox>
              <TopRuler />
            </RulerBox>
            <RulerBox>
              <SideRuler />
            </RulerBox>
            <Canvas>
              <Artboard>
                <svg width="933" height="800" viewBox="0 1 933 800" aria-label="Red outline">
                  <path d={rounded(outline, 6)} fill="none" stroke="#dc1f2c" strokeWidth="2" />
                </svg>
              </Artboard>
            </Canvas>
            <ScrollColumn>
              <Chevron dir="up" c="#b0b0b0" />
            </ScrollColumn>
          </Stage>
          <Hint>
            <svg width="18" height="18" viewBox="0 0 18 18" aria-hidden="true">
              <circle cx="9" cy="9" r="9" fill="#cfcfcf" />
              <path d="M6 7c0-4 6-4 6-.5 0 2-3 2-3 4.500M9 12.500v2" fill="none" stroke="#444" strokeWidth="1.800" />
            </svg>
            <p>
              <b>Select</b> the path or anchor point of an object{"  |  "}
              <b>Shift+Click</b> to select multiple anchor points or paths
            </p>
          </Hint>
          <StatusClip>
            <Status>
              <Field $w={60} aria-label="Zoom" defaultValue="80,11%" />
              <Slot $w={31}>
                <Chevron />
              </Slot>
              <Field $w={60} aria-label="Rotation" defaultValue="00" />
              <Slot $w={24}>
                <Chevron />
              </Slot>
              <Slot $w={52}>
                <StepIcon back bar />
                <StepIcon back />
              </Slot>
              <Field $w={49} aria-label="Artboard" defaultValue="1" />
              <Slot $w={24}>
                <Chevron />
              </Slot>
              <Slot $w={54}>
                <StepIcon />
                <StepIcon bar />
              </Slot>
              <Slot $w={248}>
                <Soft>Direct Selection</Soft>
              </Slot>
              <Slot $w={22}>
                <Svg s={14}>
                  <path d="M5 0l14 12L5 24z" fill={color.icon} stroke="none" />
                </Svg>
              </Slot>
              <ScrollTrack>
                <Chevron dir="left" c="#b0b0b0" />
                <Thumb />
              </ScrollTrack>
            </Status>
          </StatusClip>

          <LayersPanel>
            <Tabs $h={34}>
              <Tab $on $w={56}>
                Layers
              </Tab>
              <Tab $w={108}>Graphic Styles</Tab>
              <PanelTools>
                <svg width="14" height="10" viewBox="0 0 14 10" fill="none" stroke="currentColor" strokeWidth="1.600" aria-hidden="true">
                  <path d="M1 1l4 4-4 4M8 1l4 4-4 4" />
                </svg>
                <svg width="1" height="14" aria-hidden="true">
                  <path d="M.5 0v14" stroke="currentColor" />
                </svg>
                <svg width="13" height="11" stroke="#a0a0a0" aria-hidden="true">
                  <path d="M0 1.500h13M0 5.500h13M0 9.500h13" />
                </svg>
              </PanelTools>
            </Tabs>
            <SearchRow>
              <SearchBox>
                <Magnifier s={16} />
                <input placeholder="Search All" aria-label="Search All" />
              </SearchBox>
              <svg width="16" height="17" viewBox="0 0 16 17" aria-hidden="true">
                <path d="M0 0h16l-6 8v6l-4 3V8z" fill="currentColor" />
              </svg>
            </SearchRow>
            <LayerList>
              {layers.map((l, i) => (
                <LayerRow key={i} $on={l.on}>
                  <Cell $w={26} $dim={!l.on} aria-label="Visibility">
                    {l.eye && <Eye />}
                  </Cell>
                  <Cell $w={27} $dim={l.child} aria-label="Lock">
                    {l.lock && <Lock />}
                  </Cell>
                  <ColorBar $c={l.on ? "#f25260" : "#5b7bea"} />
                  <Expander $w={l.child ? 62 : 33}>
                    {!l.child && <Chevron dir={l.on ? "right" : "down"} />}
                  </Expander>
                  <LayerThumb kind={l.thumb} />
                  <LayerName>{l.name}</LayerName>
                  <TargetCell aria-label="Target">
                    <Ring />
                  </TargetCell>
                  {l.on && <Flag />}
                </LayerRow>
              ))}
            </LayerList>
            <LayersFoot>
              <Slot $w={58} $start>
                2 Layers
              </Slot>
              <FootIcon aria-label="Collect for export">
                <Svg s={18}>
                  <path d="M4 4h15v15H4zM1 4h3V1M19 1v3h4M4 23v-4H0" />
                  <path d="M13 11h9v12l-4-4-5 4z" {...solid} />
                </Svg>
              </FootIcon>
              <FootIcon aria-label="Export">
                <Svg s={18}>
                  <path d="M9 5H2v17h15v-8M9 15L22 2M13 1.500h9.500V11" strokeWidth="2.200" />
                </Svg>
              </FootIcon>
              <FootIcon aria-label="Locate object" $dim>
                <Magnifier s={15} />
              </FootIcon>
              <FootIcon aria-label="Make clipping mask">
                <Svg s={16}>
                  <path d="M2 2h14v14H2zM9 9h13v13H9z" />
                  <path d="M8 8h8v8H8z" {...solid} />
                </Svg>
              </FootIcon>
              <FootIcon aria-label="New sublayer">
                <Svg s={19}>
                  <path d="M9 7h13v14H9zM15.500 10v8M11.500 14h8M2 1v8h5M4 6l3 3-3 3" />
                </Svg>
              </FootIcon>
              <FootIcon aria-label="New layer">
                <Svg s={17}>
                  <path d="M2 2h20v20H2zM12 7v10M7 12h10" strokeWidth="2" />
                </Svg>
              </FootIcon>
              <FootIcon aria-label="Delete">
                <Svg s={17}>
                  <path d="M4 6v16.500h16V6M1 5h22M8 5V1.500h8V5M9 9v11M12 9v11M15 9v11" strokeWidth="2" />
                </Svg>
              </FootIcon>
            </LayersFoot>
            <PanelGrip>
              <Grip $h={10} />
            </PanelGrip>
          </LayersPanel>
        </Doc>

        <Dock>
          <StripHead $end>
            <DoubleTri flip />
          </StripHead>
          {dock.map((group, i) => (
            <DockGroup key={i}>
              <Grip $h={12} />
              {group.map((b) => (
                <DockButton key={b.name} $on={b.on} aria-label={b.name}>
                  {b.art}
                </DockButton>
              ))}
            </DockGroup>
          ))}
        </Dock>

        <Side>
          <StripHead />
          <Tabs $h={34}>
            <Tab $w={84}>Properties</Tab>
            <Tab $on $w={94}>
              Image Trace
            </Tab>
            <Tab $w={72}>Libraries</Tab>
          </Tabs>
          <TraceModes>
            {traceIcons.map((art, i) => (
              <Svg key={i} s={18}>
                {art}
              </Svg>
            ))}
          </TraceModes>
          <TraceForm>
            <FormLabel htmlFor="preset">Preset:</FormLabel>
            <TraceSelect id="preset" $strong>
              <option>[Default]</option>
            </TraceSelect>
            <FormLabel htmlFor="view">View:</FormLabel>
            <TraceSelect id="view">
              <option>Tracing Result</option>
            </TraceSelect>
            <FormLabel htmlFor="mode">Mode:</FormLabel>
            <TraceSelect id="mode">
              <option>Black and White</option>
            </TraceSelect>
            <FormLabel htmlFor="palette">Palette:</FormLabel>
            <TraceSelect id="palette">
              <option>Limited</option>
            </TraceSelect>
            <FormLabel htmlFor="threshold">Threshold:</FormLabel>
            <Range id="threshold" type="range" defaultValue={49} />
          </TraceForm>
          <RangeEnds>
            <span>Less</span>
            <span>More</span>
          </RangeEnds>
          <Advanced>
            <svg width="8" height="14" aria-hidden="true">
              <path d="M0 0l8 7-8 7z" fill="#d8d8d8" />
            </svg>
            Advanced
          </Advanced>
          <SideRow $h={46}>
            <InfoLabel $w={46}>Info:</InfoLabel>
            <InfoCell $w={92}>
              <Svg s={16}>
                <path d="M1 3h8c8 1 9 8 10 18M1 1v5M17 17l5 5" strokeWidth="2.200" />
              </Svg>
              0
            </InfoCell>
            <InfoCell $w={92}>
              <Svg s={15}>
                <path d="M2 3c9 1 16 4 17 18l-3-1c0-7-6-11-14-13z" {...solid} />
              </Svg>
              0
            </InfoCell>
            <InfoCell $w={60}>
              <Svg s={15}>
                <path d="M1 1h22v22H1zM7 7h4v4H7zM13 13h5v5h-5z" strokeWidth="2.400" />
              </Svg>
              0
            </InfoCell>
          </SideRow>
          <SideRow $h={38}>
            <Dot $show />
            <CheckLabel>
              <CheckBox>
                <Check type="checkbox" defaultChecked />
                <svg width="16" height="16" aria-hidden="true">
                  <path d="M4 8l3 4 5-8" fill="none" stroke="#505050" strokeWidth="2" />
                </svg>
              </CheckBox>
              Auto Grouping
            </CheckLabel>
            <WideButton>Expand</WideButton>
          </SideRow>
          <SideRow $h={39}>
            <Dot />
            <CheckLabel>
              <Check type="checkbox" />
              Preview
            </CheckLabel>
            <WideButton>Trace</WideButton>
          </SideRow>
          <SideFoot $h={40}>
            <InfoMark s={16} ring />
            <Svg s={16}>
              <path d="M1 3h22v14H12l-7 6v-6H1z" {...solid} />
              <path d="M5 10h3M10.500 10h3M16 10h3" stroke="#444" strokeWidth="2.400" />
            </Svg>
          </SideFoot>

          <ColorPanel>
            <ColorHead />
            <ColorTabs>
              <Tabs $h={33}>
                <Tab $w={75}>Swatches</Tab>
                <Tab $on $w={62}>
                  <svg width="7" height="10" viewBox="0 0 7 10" fill="none" stroke="#b0b0b0" aria-hidden="true">
                    <path d="M1 4l2.500-3L6 4zM1 6l2.500 3L6 6z" />
                  </svg>
                  Color
                </Tab>
                <Tab $w={92}>Color Guide</Tab>
              </Tabs>
            </ColorTabs>
            <ColorRow>
              <NoneSwatch w={16} h={16} thick={2} />
              <Chip $bg="#000" aria-label="Black" />
              <Chip $bg="#fff" aria-label="White" />
              <Slot $w={132} />
              <Dotted htmlFor="hex">#</Dotted>
              <HexField id="hex" $w={60} defaultValue="FF0000" />
            </ColorRow>
            <Spectrum />
            <PanelGrip>
              <Grip $h={9} />
            </PanelGrip>
          </ColorPanel>
        </Side>
      </Body>
    </Shell>
  );
}
